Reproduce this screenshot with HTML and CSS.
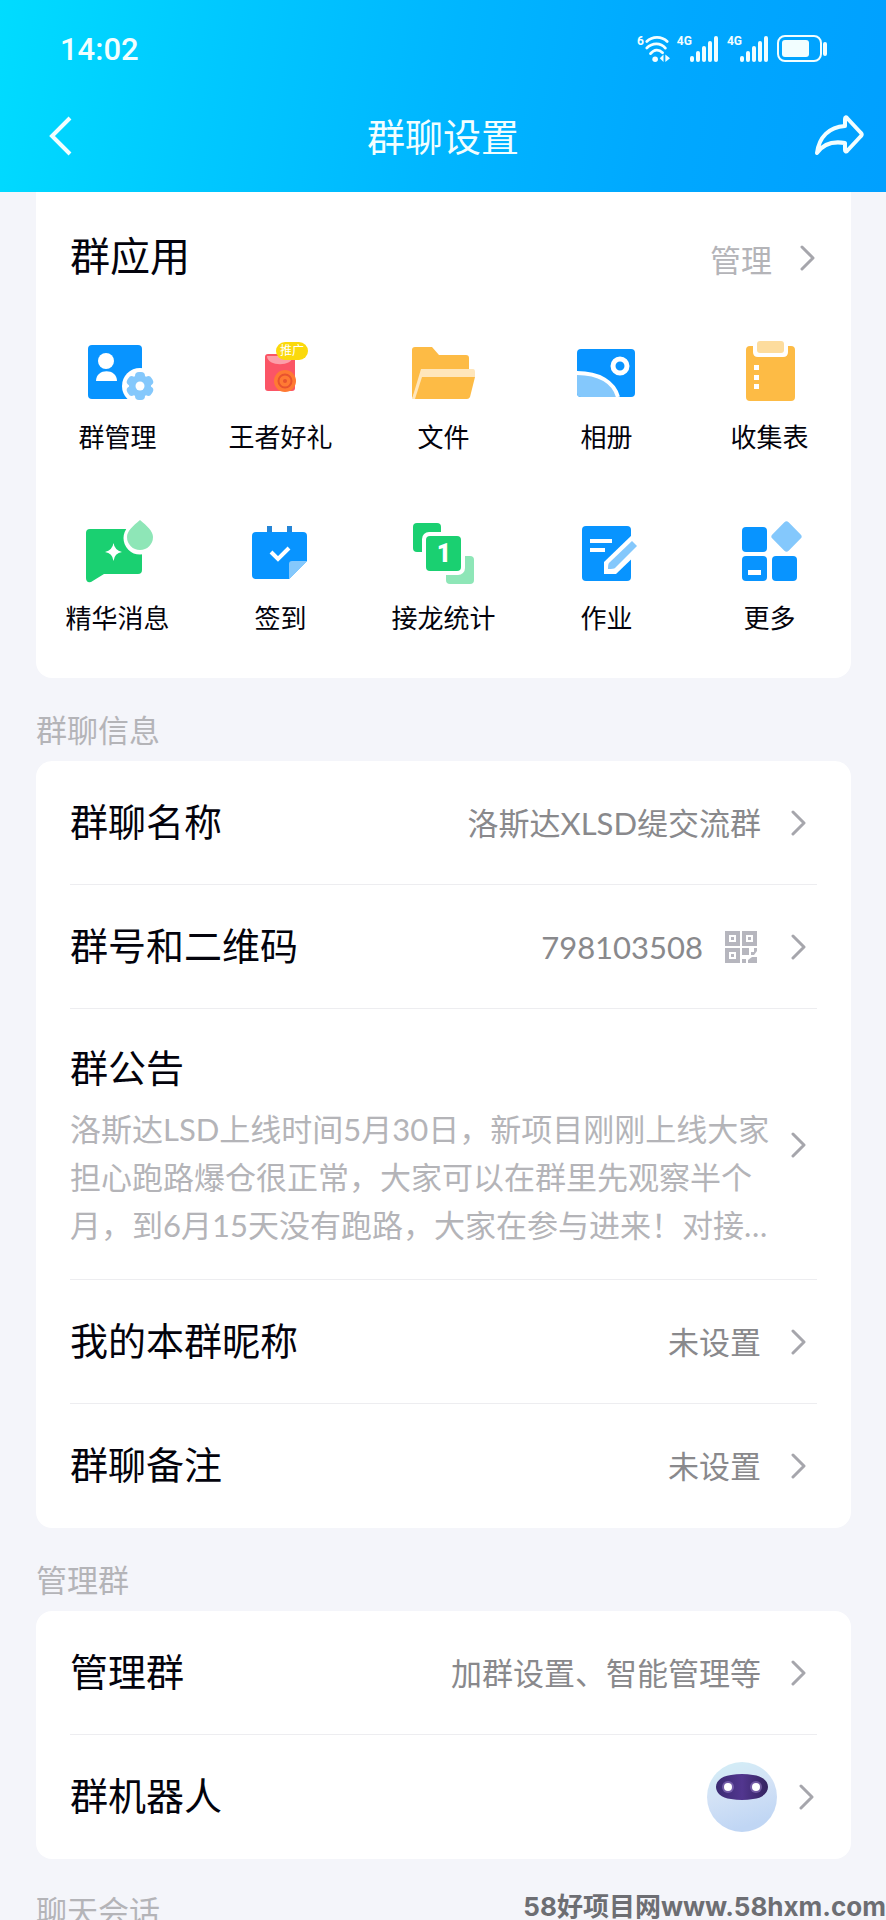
FILE: index.html
```html
<!DOCTYPE html>
<html lang="zh-CN">
<head>
  <meta charset="UTF-8" />
  <meta name="viewport" content="width=device-width, initial-scale=1.0"/>
  <title>群聊设置</title>
  <link rel="stylesheet" href="styles.css">
</head>
<body>
  <svg class="sprite" xmlns="http://www.w3.org/2000/svg" aria-hidden="true">
    <symbol id="chevron" viewBox="0 0 16 28">
      <path d="M2 3l11 11L2 25" fill="none" stroke="currentColor" stroke-width="3" stroke-linecap="round" stroke-linejoin="round"/>
    </symbol>
    <symbol id="signal" viewBox="0 0 28 26">
      <rect x="0" y="20" width="4" height="6" rx="2"/>
      <rect x="6" y="15" width="4" height="11" rx="2"/>
      <rect x="12" y="10" width="4" height="16" rx="2"/>
      <rect x="18" y="5" width="4" height="21" rx="2"/>
      <rect x="24" y="0" width="4" height="26" rx="2"/>
    </symbol>
  </svg>

  <header class="header">
    <div class="status-bar">
      <span class="time">14:02</span>
      <div class="status-icons">
        <span class="net">6</span>
        <svg class="wifi" viewBox="0 0 28 28" fill="none" stroke="currentColor" stroke-width="3" stroke-linecap="round">
          <path d="M3 6c6-6 16-6 22 0"/>
          <path d="M3 13c6-6 15-6 20 0"/>
          <path d="M7 19c4-5 9-5 13-1"/>
          <circle cx="12" cy="25" r="3" fill="currentColor" stroke="none"/>
          <path d="M21 20v8l-4-4zM23 20v8l5-4z" fill="currentColor" stroke="none"/>
        </svg>
        <span class="net net-4g">4G</span>
        <svg class="bars"><use href="#signal"/></svg>
        <span class="net net-4g">4G</span>
        <svg class="bars"><use href="#signal"/></svg>
        <svg class="battery" viewBox="0 0 50 28">
          <rect x="1" y="1" width="43" height="25" rx="7" fill="none" stroke="currentColor" stroke-width="2"/>
          <rect x="5" y="5" width="27" height="17" rx="3" fill="currentColor"/>
          <rect x="46" y="7" width="4" height="14" rx="2" fill="currentColor"/>
        </svg>
      </div>
    </div>
    <nav class="nav-bar">
      <button class="nav-button" type="button" aria-label="返回">
        <svg class="back" viewBox="0 0 24 40" fill="none" stroke="currentColor" stroke-width="4">
          <path d="M22 2L4 20l18 18"/>
        </svg>
      </button>
      <h1>群聊设置</h1>
      <button class="nav-button" type="button" aria-label="分享">
        <svg class="share" viewBox="0 0 50 42" fill="none" stroke="currentColor" stroke-width="4" stroke-linejoin="round">
          <path d="M31 4c0-2 1-2 2-1l14 15c1 1 1 2 0 3L33 36c-1 1-2 0-2-1v-7C19 26 9 29 3 38 5 22 15 12 31 11z"/>
        </svg>
      </button>
    </nav>
  </header>

  <main class="content">
    <section class="card apps-card">
      <div class="apps-header">
        <h2>群应用</h2>
        <a class="manage" href="#">管理<svg class="chevron"><use href="#chevron"/></svg></a>
      </div>
      <div class="apps">
        <a class="app" href="#">
          <svg viewBox="0 0 72 72">
            <rect x="6" y="9" width="54" height="54" rx="4" fill="#0894ff"/>
            <circle cx="24" cy="25" r="8" fill="#fff"/>
            <path d="M14 45c0-13 21-13 21 0z" fill="#fff"/>
            <circle cx="58" cy="50" r="18" fill="#fff"/>
            <g fill="#84c8fc">
              <circle cx="58" cy="50" r="11"/>
              <rect x="53" y="36" width="10" height="28" rx="4"/>
              <rect x="53" y="36" width="10" height="28" rx="4" transform="rotate(60 58 50)"/>
              <rect x="53" y="36" width="10" height="28" rx="4" transform="rotate(120 58 50)"/>
            </g>
            <circle cx="58" cy="50" r="4.500" fill="#fff"/>
          </svg>
          <span>群管理</span>
        </a>
        <a class="app" href="#">
          <svg viewBox="0 0 72 72">
            <rect x="20" y="18" width="30" height="37" rx="3" fill="#fb5566"/>
            <path d="M22 20h26c0 11-26 11-26 0z" fill="#fc9fa9"/>
            <circle cx="40" cy="45" r="11" fill="#ff7a33"/>
            <circle cx="40" cy="45" r="6.500" fill="none" stroke="#e8532f" stroke-width="2"/>
            <circle cx="40" cy="45" r="2" fill="#e8532f"/>
            <rect x="31" y="6" width="32" height="18" rx="9" fill="#fbd90c"/>
            <text class="badge-text" x="47" y="19" text-anchor="middle" fill="#fff">推广</text>
          </svg>
          <span>王者好礼</span>
        </a>
        <a class="app" href="#">
          <svg viewBox="0 0 72 72">
            <path d="M7 11h17l7 8h27q3 0 3 3v16H14L4 63V14q0-3 3-3z" fill="#fdbb45"/>
            <path d="M13 33h52q2 0 2 3v5H16L8 63H4z" fill="#ffe6bb"/>
            <path d="M14 41h53l-5 20q-1 2-3 2H7z" fill="#fdbb45"/>
          </svg>
          <span>文件</span>
        </a>
        <a class="app" href="#">
          <svg viewBox="0 0 72 72">
            <rect x="6" y="13" width="58" height="48" rx="4" fill="#0894ff"/>
            <path d="M6 37c22 0 37 9 41 24H10q-4 0-4-4z" fill="#84c8fc"/>
            <path d="M6 37c22 0 37 9 41 24" fill="none" stroke="#fff" stroke-width="4"/>
            <circle cx="49" cy="30" r="7" fill="none" stroke="#fff" stroke-width="5"/>
          </svg>
          <span>相册</span>
        </a>
        <a class="app" href="#">
          <svg viewBox="0 0 72 72">
            <rect x="12" y="10" width="49" height="55" rx="4" fill="#fdbb45"/>
            <path d="M19 8h35v8q0 5-5 5H24q-5 0-5-5z" fill="#fff"/>
            <rect x="23" y="5" width="27" height="12" rx="3" fill="#fddc9d"/>
            <path d="M20 29h5v5h-5zM20 39h5v5h-5zM20 48h5v5h-5z" fill="#fff"/>
          </svg>
          <span>收集表</span>
        </a>
        <a class="app" href="#">
          <svg viewBox="0 0 72 72">
            <path d="M8 12h48q4 0 4 4v37q0 4-4 4H22L9 65q-5 1-5-4V16q0-4 4-4z" fill="#1ad071"/>
            <path d="M31.500 26q1 7 8.500 9-7.500 1-8.500 9-1-8-8.500-9 7.500-2 8.500-9z" fill="#fff"/>
            <path d="M58 3c7 6 13 11 13 18a13 13 0 0 1-26 0c0-7 6-12 13-18z" fill="#fff" stroke="#fff" stroke-width="7"/>
            <path d="M58 3c7 6 13 11 13 17a13 13 0 0 1-26 0c0-6 6-11 13-17z" fill="#8ee6b7"/>
          </svg>
          <span>精华消息</span>
        </a>
        <a class="app" href="#">
          <svg viewBox="0 0 72 72">
            <path d="M22 9h5v8h-5zM42 9h5v8h-5z" fill="#2585d6"/>
            <path d="M11 15h47q4 0 4 4v25L44 62H11q-4 0-4-4V19q0-4 4-4z" fill="#0894ff"/>
            <path d="M44 62V47q0-3 3-3h15z" fill="#84c8fc"/>
            <path d="M26 35l7 7 11-11" fill="none" stroke="#fff" stroke-width="4"/>
          </svg>
          <span>签到</span>
        </a>
        <a class="app" href="#">
          <svg viewBox="0 0 72 72">
            <rect x="5" y="6" width="28" height="29" rx="4" fill="#1ad071"/>
            <rect x="38" y="39" width="28" height="28" rx="4" fill="#8ee6b7"/>
            <rect x="14" y="15" width="43" height="43" rx="7" fill="#fff"/>
            <rect x="18" y="19" width="35" height="35" rx="4" fill="#1ad071"/>
            <text class="count" x="36" y="45" text-anchor="middle" fill="#fff">1</text>
          </svg>
          <span>接龙统计</span>
        </a>
        <a class="app" href="#">
          <svg viewBox="0 0 72 72">
            <rect x="11" y="9" width="49" height="55" rx="4" fill="#0894ff"/>
            <path d="M19 22h22v4H19zM19 31h15v4H19z" fill="#fff"/>
            <path d="M61 18L33 45v12h12l26-25z" fill="#fff"/>
            <path d="M61 24l5 5-22 22q-1 1-7 1 0-5 1-6z" fill="#84c8fc"/>
          </svg>
          <span>作业</span>
        </a>
        <a class="app" href="#">
          <svg viewBox="0 0 72 72">
            <g fill="#0894ff">
              <rect x="8" y="10" width="25" height="25" rx="4"/>
              <rect x="8" y="39" width="25" height="25" rx="4"/>
              <rect x="38" y="39" width="25" height="25" rx="4"/>
            </g>
            <rect x="41" y="8" width="23" height="23" rx="3" transform="rotate(45 52.500 19.500)" fill="#84c8fc"/>
            <path d="M14 53h13v5H14z" fill="#fff"/>
          </svg>
          <span>更多</span>
        </a>
      </div>
    </section>

    <h3 class="section-title">群聊信息</h3>
    <section class="card list">
      <a class="row" href="#">
        <span class="label">群聊名称</span>
        <span class="value">洛斯达XLSD缇交流群</span>
        <svg class="chevron"><use href="#chevron"/></svg>
      </a>
      <a class="row" href="#">
        <span class="label">群号和二维码</span>
        <span class="value">798103508</span>
        <svg class="qr" viewBox="0 0 32 32" fill="none" stroke="#b6b6be" stroke-width="4">
          <path d="M2 2h11v11H2zM19 2h11v11H19zM2 19h11v11H2z"/>
          <path d="M6 6h3v3H6zM23 6h3v3h-3zM6 23h3v3H6zM17 17h7v7h-7zM29 17h3v3l-3 4h-3v-3h3zM17 28h4v4h-4zM23 29l4-3h5v6h-9z" fill="#b6b6be" stroke="none"/>
        </svg>
        <svg class="chevron"><use href="#chevron"/></svg>
      </a>
      <a class="row notice" href="#">
        <div class="notice-body">
          <span class="label">群公告</span>
          <p>洛斯达LSD上线时间5月30日，新项目刚刚上线大家<br>担心跑路爆仓很正常，大家可以在群里先观察半个<br>月，到6月15天没有跑路，大家在参与进来！对接…</p>
        </div>
        <svg class="chevron"><use href="#chevron"/></svg>
      </a>
      <a class="row" href="#">
        <span class="label">我的本群昵称</span>
        <span class="value">未设置</span>
        <svg class="chevron"><use href="#chevron"/></svg>
      </a>
      <a class="row" href="#">
        <span class="label">群聊备注</span>
        <span class="value">未设置</span>
        <svg class="chevron"><use href="#chevron"/></svg>
      </a>
    </section>

    <h3 class="section-title">管理群</h3>
    <section class="card list">
      <a class="row" href="#">
        <span class="label">管理群</span>
        <span class="value">加群设置、智能管理等</span>
        <svg class="chevron"><use href="#chevron"/></svg>
      </a>
      <a class="row robot-row" href="#">
        <span class="label">群机器人</span>
        <svg class="robot" viewBox="0 0 70 70">
          <defs>
            <linearGradient id="face" x1="0" y1="0" x2="0.300" y2="1">
              <stop offset="0" stop-color="#d3eff6"/>
              <stop offset="0.500" stop-color="#d3e2f6"/>
              <stop offset="1" stop-color="#c0d6f4"/>
            </linearGradient>
            <linearGradient id="visor" x1="0" y1="0" x2="1" y2="0">
              <stop offset="0" stop-color="#3b2b72"/>
              <stop offset="0.500" stop-color="#52368f"/>
              <stop offset="1" stop-color="#33235f"/>
            </linearGradient>
          </defs>
          <circle cx="35" cy="35" r="35" fill="url(#face)"/>
          <path d="M24 13q11-2 22 0c20 2 20 22 0 24q-11 2-22 0c-20-2-20-22 0-24z" fill="url(#visor)"/>
          <circle cx="21" cy="25" r="6" fill="#b9a0e6" opacity="0.400"/>
          <circle cx="49" cy="25" r="6" fill="#b9a0e6" opacity="0.400"/>
          <circle cx="21" cy="25" r="4" fill="#fff"/>
          <circle cx="49" cy="25" r="4" fill="#fff"/>
        </svg>
        <svg class="chevron"><use href="#chevron"/></svg>
      </a>
    </section>

    <h3 class="section-title">聊天会话</h3>
  </main>

  <div class="watermark">58好项目网www.58hxm.com</div>
</body>
</html>
```
FILE: styles.css
```css
:root {
  --bg-color: #f4f5fa;
  --card-bg: #ffffff;
  --text-primary: #03030c;
  --text-secondary: #89898c;
  --text-muted: #b4b4b8;
  --border-color: #ededf0;
}

* {
  box-sizing: border-box;
}

body {
  margin: 0;
  height: 100vh;
  display: flex;
  flex-direction: column;
  position: relative;
  overflow: hidden;
  background: var(--bg-color);
  color: var(--text-primary);
  font-family: Lato, 'Noto Sans CJK SC', sans-serif;
}

h1, h2, h3, p {
  margin: 0;
  font-weight: 400;
}

a {
  color: inherit;
  text-decoration: none;
}

.sprite {
  position: absolute;
  width: 0;
  height: 0;
}

/* header */
.header {
  flex: none;
  background: linear-gradient(100deg, #00dcff 0%, #00c8ff 25%, #00b6ff 50%, #00a8ff 75%, #00a0ff 100%);
  color: #f2feff;
}

.status-bar {
  display: flex;
  justify-content: space-between;
  align-items: center;
  height: 96px;
  padding: 2px 59px 0 60px;
}

.time {
  font-family: Roboto, sans-serif;
  font-size: 31px;
  font-weight: 500;
}

.status-icons {
  display: flex;
  align-items: flex-start;
}

.net {
  font-family: Roboto, sans-serif;
  font-size: 12px;
  line-height: 12px;
  font-weight: 700;
}

.net-4g {
  margin-left: 7px;
}

.wifi {
  width: 26px;
  height: 28px;
}

.bars {
  width: 28px;
  height: 26px;
  margin: 1px 2px 0 -2px;
  fill: currentColor;
}

.battery {
  width: 50px;
  height: 28px;
  margin-left: 7px;
}

.nav-bar {
  display: flex;
  justify-content: space-between;
  align-items: center;
  height: 96px;
  padding: 0 19px 16px;
}

.nav-bar h1 {
  font-size: 38px;
  line-height: 48px;
}

.nav-button {
  display: flex;
  justify-content: center;
  padding: 0;
  width: 56px;
  border: none;
  background: none;
  color: inherit;
  cursor: pointer;
}

.back {
  width: 24px;
  height: 40px;
  margin-left: 26px;
}

.share {
  width: 50px;
  height: 42px;
}

/* cards */
.content {
  flex: 1;
  min-height: 0;
  overflow-y: auto;
  scrollbar-width: none;
  padding: 0 35px 0 36px;
}

.card {
  background: var(--card-bg);
  border-radius: 16px;
}

.chevron {
  flex: none;
  width: 16px;
  height: 28px;
  color: #a6a6ac;
}

.apps-card {
  padding-bottom: 32px;
  border-radius: 0 0 16px 16px;
}

.apps-header {
  display: flex;
  justify-content: space-between;
  align-items: center;
  height: 132px;
  padding: 0 35px 0 34px;
}

.apps-header h2 {
  padding-bottom: 8px;
  font-size: 40px;
}

.manage {
  display: flex;
  align-items: center;
  gap: 28px;
  font-size: 31px;
  color: var(--text-muted);
}

.apps {
  display: grid;
  grid-template-columns: repeat(5, 1fr);
  row-gap: 52px;
  padding-top: 12px;
}

.app {
  display: flex;
  flex-direction: column;
  align-items: center;
  gap: 1px;
  font-size: 26px;
  line-height: 56px;
}

.app svg {
  width: 72px;
  height: 72px;
  overflow: visible;
}

.badge-text {
  font-size: 12px;
}

.count {
  font-family: Roboto, sans-serif;
  font-size: 25px;
  font-weight: 900;
}

.section-title {
  height: 83px;
  padding-top: 22px;
  font-size: 31px;
  line-height: 60px;
  color: var(--text-muted);
}

/* settings rows */
.list {
  padding: 0 34px;
}

.row {
  display: flex;
  align-items: center;
  min-height: 124px;
  padding-right: 10px;
  border-bottom: 1px solid var(--border-color);
}

.row:last-child {
  border-bottom: none;
}

.label {
  padding-bottom: 4px;
  font-size: 38px;
  line-height: 52px;
}

.value {
  margin-left: auto;
  font-size: 31px;
  line-height: 48px;
  color: var(--text-secondary);
}

.row .chevron {
  margin-left: 30px;
}

.qr {
  width: 32px;
  height: 32px;
  margin-left: 22px;
}

.qr + .chevron {
  margin-left: 34px;
}

.notice {
  padding-top: 32px;
  padding-bottom: 30px;
}

.notice-body {
  flex: 1;
  min-width: 0;
}

.notice .label {
  display: block;
  margin-bottom: 8px;
}

.notice p {
  font-size: 31px;
  line-height: 48px;
  white-space: nowrap;
  color: var(--text-muted);
}

.notice .chevron {
  margin-left: 0;
}

.robot-row {
  padding-right: 2px;
}

.robot {
  width: 70px;
  height: 70px;
  margin-left: auto;
}

.robot-row .chevron {
  margin-left: 22px;
}

.watermark {
  position: absolute;
  right: 0;
  bottom: 0;
  font-family: Inter, 'Noto Sans CJK SC', sans-serif;
  font-size: 26px;
  line-height: 26px;
  font-weight: 700;
  color: #6d6e73;
}
```
